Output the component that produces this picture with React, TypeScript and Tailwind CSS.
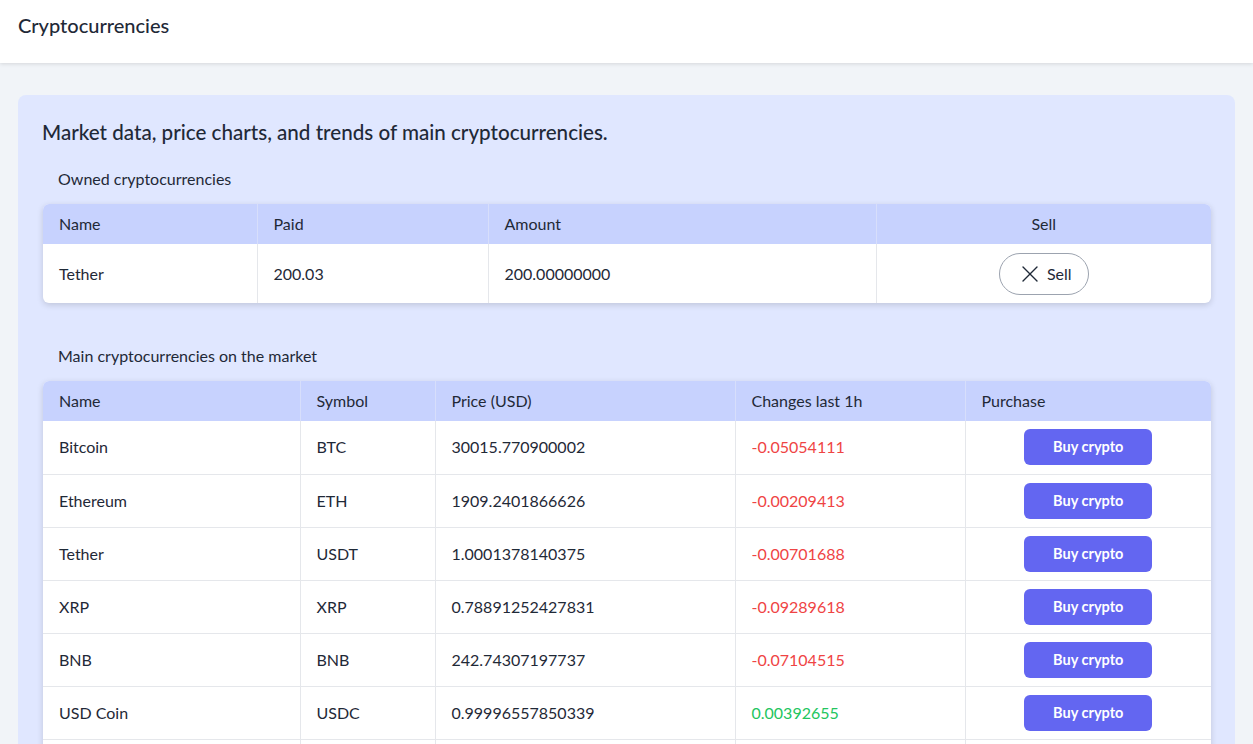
import { X } from 'lucide-react';

const coins = [
  { name: 'Bitcoin', symbol: 'BTC', price: '30015.770900002', change: '-0.05054111' },
  { name: 'Ethereum', symbol: 'ETH', price: '1909.2401866626', change: '-0.00209413' },
  { name: 'Tether', symbol: 'USDT', price: '1.0001378140375', change: '-0.00701688' },
  { name: 'XRP', symbol: 'XRP', price: '0.78891252427831', change: '-0.09289618' },
  { name: 'BNB', symbol: 'BNB', price: '242.74307197737', change: '-0.07104515' },
  { name: 'USD Coin', symbol: 'USDC', price: '0.99996557850339', change: '0.00392655' },
  { name: 'Cardano', symbol: 'ADA', price: '0.3145', change: '-0.0123' },
];

export default function App() {
  return (
    <div className="min-h-screen bg-[#f1f4f8] text-[#1f2937]" style={{ fontFamily: 'Lato, "Noto Sans", sans-serif' }}>
      {/* Top bar */}
      <header className="h-[63px] bg-white shadow-[0_1px_4px_rgba(0,0,0,0.12)] flex items-center px-[18px]">
        <h1 className="text-[20px] font-medium text-[#1f2937] -mt-[13px]">Cryptocurrencies</h1>
      </header>

      <main className="px-[18px] pt-8">
        <section className="rounded-lg bg-[#e0e7ff] pl-6 pr-6 pt-[23px] pb-8">
          <h2 className="text-[20.6px] font-medium text-[#1f2937] leading-[28px]">
            Market data, price charts, and trends of main cryptocurrencies.
          </h2>

          {/* Owned */}
          <p className="pl-4 pt-[21px] pb-[13px] text-[16px] leading-[24px]">Owned cryptocurrencies</p>
          <div className="ml-px rounded-md overflow-hidden bg-white shadow-[0_2px_6px_rgba(0,0,0,0.15)]">
            <table className="w-full border-collapse text-[16px] table-fixed">
              <thead>
                <tr className="bg-[#c7d2fe] h-10 text-[#1f2937]">
                  <th className="w-[214px] text-left font-normal px-4 border-r border-[#d7defb]">Name</th>
                  <th className="w-[231px] text-left font-normal px-4 border-r border-[#d7defb]">Paid</th>
                  <th className="w-[388px] text-left font-normal px-4 border-r border-[#d7defb]">Amount</th>
                  <th className="text-center font-normal px-4">Sell</th>
                </tr>
              </thead>
              <tbody>
                <tr className="h-[59px]">
                  <td className="px-4 border-r border-[#e5e7eb]">Tether</td>
                  <td className="px-4 border-r border-[#e5e7eb]">200.03</td>
                  <td className="px-4 border-r border-[#e5e7eb]">200.00000000</td>
                  <td className="px-4 text-center">
                    <button className="inline-flex items-center gap-[3px] h-[42px] w-[90px] justify-center rounded-full border border-[#9ca3af] bg-white text-[16px] text-[#1f2937]">
                      <X size={28} strokeWidth={1.2} />
                      Sell
                    </button>
                  </td>
                </tr>
              </tbody>
            </table>
          </div>

          {/* Market */}
          <p className="pl-4 pt-[41px] pb-[13px] text-[16px] leading-[24px]">Main cryptocurrencies on the market</p>
          <div className="ml-px rounded-md overflow-hidden bg-white shadow-[0_2px_6px_rgba(0,0,0,0.15)]">
            <table className="w-full border-collapse text-[16px] table-fixed">
              <thead>
                <tr className="bg-[#c7d2fe] h-10 text-[#1f2937]">
                  <th className="w-[257px] text-left font-normal px-4 border-r border-[#d7defb]">Name</th>
                  <th className="w-[135px] text-left font-normal px-4 border-r border-[#d7defb]">Symbol</th>
                  <th className="w-[300px] text-left font-normal px-4 border-r border-[#d7defb]">Price (USD)</th>
                  <th className="w-[230px] text-left font-normal px-4 border-r border-[#d7defb]">Changes last 1h</th>
                  <th className="text-left font-normal px-4">Purchase</th>
                </tr>
              </thead>
              <tbody>
                {coins.map((c) => (
                  <tr key={c.symbol} className="h-[53px] border-b border-[#e5e7eb]">
                    <td className="px-4 border-r border-[#e5e7eb]">{c.name}</td>
                    <td className="px-4 border-r border-[#e5e7eb]">{c.symbol}</td>
                    <td className="px-4 border-r border-[#e5e7eb]">{c.price}</td>
                    <td className={`px-4 border-r border-[#e5e7eb] ${c.change.startsWith('-') ? 'text-[#ef4444]' : 'text-[#22c55e]'}`}>
                      {c.change}
                    </td>
                    <td className="px-4 text-center">
                      <button className="h-9 w-32 rounded-md bg-[#6366f1] text-white text-[14.5px] font-bold">Buy crypto</button>
                    </td>
                  </tr>
                ))}
              </tbody>
            </table>
          </div>
        </section>
      </main>
    </div>
  );
}
